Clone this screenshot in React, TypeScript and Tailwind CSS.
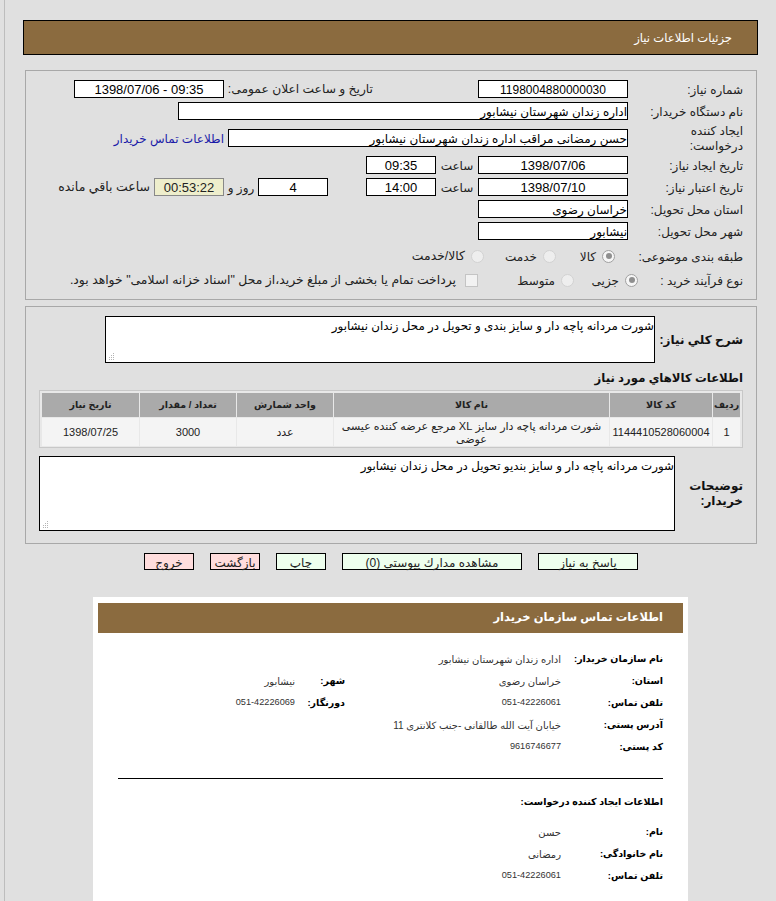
const font = "font-['Liberation_Sans','DejaVu_Sans',sans-serif]";

const box = "h-[18px] border border-black bg-white text-[12px] leading-[18px] shrink-0";
const num = " text-center text-[13px]";

function Row({ label, children, className = "h-[18px]" }: { label: React.ReactNode; children?: React.ReactNode; className?: string }) {
  return (
    <div className={"flex items-center " + className}>
      <div className="w-[115px] shrink-0 pt-[2px] text-[12px] leading-[15px] text-[#222]">{label}</div>
      {children}
    </div>
  );
}

function Radio({ checked }: { checked?: boolean }) {
  if (checked) {
    return (
      <span className="w-[13px] h-[13px] rounded-full border border-[#a0a0a0] bg-[#f6f6f6] flex items-center justify-center shrink-0">
        <span className="w-[6px] h-[6px] rounded-full bg-[#8f8f8f]" />
      </span>
    );
  }
  return <span className="w-[13px] h-[13px] rounded-full border border-[#d2d2d2] bg-[#eeeeee] shrink-0" />;
}

function Grip() {
  return (
    <svg className="absolute left-[2px] bottom-[1px]" width="8" height="8" viewBox="0 0 8 8" fill="#b4b4b4">
      <rect x="5" y="0" width="1" height="1" />
      <rect x="3" y="2" width="1" height="1" />
      <rect x="5" y="2" width="1" height="1" />
      <rect x="1" y="4" width="1" height="1" />
      <rect x="3" y="4" width="1" height="1" />
      <rect x="5" y="4" width="1" height="1" />
      <rect x="1" y="6" width="1" height="1" />
      <rect x="3" y="6" width="1" height="1" />
      <rect x="5" y="6" width="1" height="1" />
    </svg>
  );
}

function valueSize(v: string) {
  return /^[\d-]+$/.test(v) ? "text-[9.2px]" : "text-[10px]";
}

function InfoRow({ label, value, label2, value2 }: { label: string; value: string; label2?: string; value2?: string }) {
  return (
    <div className="flex items-center h-[22px]">
      <div className="w-[102px] shrink-0 text-[9.5px] font-bold text-black whitespace-nowrap">{label}</div>
      <div className={"w-[216px] shrink-0 text-[#333] " + valueSize(value)}>{value}</div>
      {label2 && <div className="w-[50px] shrink-0 text-[9.5px] font-bold text-black">{label2}</div>}
      {value2 && <div className={"text-[#333] " + valueSize(value2)}>{value2}</div>}
    </div>
  );
}

const cols = [
  { w: "w-[27px]", title: "ردیف" },
  { w: "w-[102px]", title: "کد کالا" },
  { w: "w-[275px]", title: "نام کالا" },
  { w: "w-[96px]", title: "واحد شمارش" },
  { w: "w-[96px]", title: "تعداد / مقدار" },
  { w: "w-[97px]", title: "تاریخ نیاز" },
];

const cells = [
  "1",
  "1144410528060004",
  "شورت مردانه پاچه دار سایز XL مرجع عرضه کننده عیسی عوضی",
  "عدد",
  "3000",
  "1398/07/25",
];

export default function App() {
  return (
    <div dir="rtl" className={"w-[776px] h-[901px] overflow-hidden bg-[#e0e0e0] relative " + font}>
      <div className="absolute left-[4px] top-0 bottom-0 w-px bg-[#bdbdbd]" />

      <div className="pt-[20px] pr-[18px] pl-[23px]">
        <div className="h-[35px] border border-black bg-[#8b6b3f] flex items-center pr-[25px] text-[11.6px] text-white">
          جزئیات اطلاعات نیاز
        </div>
      </div>

      <div className="mt-[15px] mr-[19px] ml-[25px] h-[230px] border border-[#a8a8a8] pt-[9px] pr-[13px]">
        <Row label="شماره نیاز:">
          <div className={box + " w-[150px] text-center text-[12.6px]"} dir="ltr">1198004880000030</div>
          <div className="w-[105px] shrink-0" />
          <div className="w-[145px] shrink-0 pt-px text-[12.25px] text-[#222] whitespace-nowrap">تاریخ و ساعت اعلان عمومی:</div>
          <div className={box + " w-[150px] mr-[4px]" + num} dir="ltr">1398/07/06 - 09:35</div>
        </Row>
        <Row label="نام دستگاه خریدار:" className="h-[18px] mt-[4px]">
          <div className={box + " w-[450px]"}>اداره زندان شهرستان نیشابور</div>
        </Row>
        <Row label={<>ایجاد کننده<br />درخواست:</>} className="h-[36px]">
          <div className={box + " w-[400px]"}>حسن رمضانی مراقب اداره زندان شهرستان نیشابور</div>
          <div className="mr-[4px] pt-px text-[12px] text-[#1a1aa8]">اطلاعات تماس خریدار</div>
        </Row>
        <Row label="تاریخ ایجاد نیاز:">
          <div className={box + " w-[150px]" + num}>1398/07/06</div>
          <div className="w-[42px] shrink-0 pt-px text-center text-[12px] text-[#222]">ساعت</div>
          <div className={box + " w-[70px]" + num}>09:35</div>
        </Row>
        <Row label="تاریخ اعتبار نیاز:" className="h-[18px] mt-[4px]">
          <div className={box + " w-[150px]" + num}>1398/07/10</div>
          <div className="w-[42px] shrink-0 pt-px text-center text-[12px] text-[#222]">ساعت</div>
          <div className={box + " w-[70px]" + num}>14:00</div>
          <div className="w-[38px] shrink-0" />
          <div className={box + " w-[70px]" + num}>4</div>
          <div className="w-[34px] shrink-0 pt-px text-center text-[12px] text-[#222]">روز و</div>
          <div className={"h-[18px] w-[70px] shrink-0 border border-[#888] bg-[#eeeecc] leading-[18px] text-[#222]" + num}>00:53:22</div>
          <div className="mr-[4px] pt-px text-[12.5px] text-[#222] whitespace-nowrap">ساعت باقي مانده</div>
        </Row>
        <Row label="استان محل تحویل:" className="h-[18px] mt-[4px]">
          <div className={box + " w-[150px]"}>خراسان رضوی</div>
        </Row>
        <Row label="شهر محل تحویل:" className="h-[18px] mt-[4px]">
          <div className={box + " w-[150px]"}>نیشابور</div>
        </Row>
        <Row label="طبقه بندی موضوعی:" className="h-[18px] mt-[7px]">
          <div className="w-[13px] shrink-0" />
          <Radio checked />
          <span className="w-[40px] shrink-0 mr-[6px] pt-px text-[12px] text-[#222]">کالا</span>
          <Radio />
          <span className="w-[53px] shrink-0 mr-[6px] pt-px text-[12px] text-[#222]">خدمت</span>
          <Radio />
          <span className="mr-[6px] pt-px text-[12.4px] text-[#222]">کالا/خدمت</span>
        </Row>
        <Row label="نوع فرآیند خرید :" className="h-[18px] mt-[6px]">
          <div className="mr-[-10px]" />
          <Radio checked />
          <span className="w-[45px] shrink-0 mr-[6px] pt-px text-[12px] text-[#222]">جزیی</span>
          <Radio />
          <span className="w-[77px] shrink-0 mr-[6px] pt-px text-[12px] text-[#222]">متوسط</span>
          <span className="w-[13px] h-[13px] border border-[#c4c4c4] bg-[#f2f2f2] shrink-0" />
          <span className="mr-[9px] pt-px text-[12.4px] text-[#222] whitespace-nowrap">پرداخت تمام یا بخشی از مبلغ خرید،از محل "اسناد خزانه اسلامی" خواهد بود.</span>
        </Row>
      </div>

      <div className="mt-[6px] mr-[19px] ml-[25px] h-[238px] border border-[#a8a8a8] pt-[9px] pr-[13px]">
        <div className="flex items-center">
          <div className="w-[88px] shrink-0 pt-px text-[12px] font-bold text-[#111]">شرح کلي نياز:</div>
          <div className="relative w-[550px] h-[47px] border border-black bg-white pt-px text-[11.85px] leading-[16px]">
            شورت مردانه پاچه دار و سایز بندی و تحویل در محل زندان نیشابور
            <Grip />
          </div>
        </div>
        <div className="mt-[7px] text-[11.7px] leading-[16px] font-bold text-[#111]">اطلاعات کالاهاي مورد نياز</div>
        <div className="mt-[4px] w-[704px] h-[58px] border border-[#c8c8c8] bg-[#e8e8e8] p-[2px]">
          <div className="flex gap-px h-[24px]">
            {cols.map((c) => (
              <div key={c.title} className={c.w + " shrink-0 bg-[#aaaaaa] flex items-center justify-center text-[9.5px] font-bold text-[#222] whitespace-nowrap"}>
                {c.title}
              </div>
            ))}
          </div>
          <div className="flex gap-px h-[28px] mt-px">
            {cols.map((c, i) => (
              <div key={c.title} className={c.w + " shrink-0 bg-[#f4f4f4] pt-px flex items-center justify-center text-center text-[11px] leading-[13px] text-[#222]"}>
                {cells[i]}
              </div>
            ))}
          </div>
        </div>
        <div className="mt-[8px] flex items-center">
          <div className="w-[68px] shrink-0 text-[12px] leading-[15px] font-bold text-[#111]">توضیحات خریدار:</div>
          <div className="relative w-[636px] h-[75px] border border-black bg-white pt-px text-[11.85px] leading-[16px]">
            شورت مردانه پاچه دار و سایز بندیو تحویل در محل زندان نیشابور
            <Grip />
          </div>
        </div>
      </div>

      <div className="mt-[9px] mr-[138px] flex text-[12px] text-[#222]">
        <button className="w-[100px] h-[17px] pt-[2px] border border-black bg-[#eeffee] leading-[15px]">پاسخ به نیاز</button>
        <button className="w-[180px] h-[17px] pt-[2px] mr-[16px] border border-black bg-[#eeffee] leading-[15px]">مشاهده مدارك پيوستي (0)</button>
        <button className="w-[50px] h-[17px] pt-[2px] mr-[16px] border border-black bg-[#eeffee] leading-[15px]">چاپ</button>
        <button className="w-[50px] h-[17px] pt-[2px] mr-[16px] border border-black bg-[#ffdddd] leading-[15px]">بازگشت</button>
        <button className="w-[50px] h-[17px] pt-[2px] mr-[16px] border border-black bg-[#ffdddd] leading-[15px]">خروج</button>
      </div>

      <div className="mt-[27px] mr-[88px] w-[595px] h-[304px] bg-white pt-[6px] px-[5px]">
        <div className="h-[30px] bg-[#8b6b3f] flex items-center pr-[20px] text-[11.5px] font-bold text-white">
          اطلاعات تماس سازمان خریدار
        </div>
        <div className="pt-[15px] pr-[20px]">
          <InfoRow label="نام سازمان خریدار:" value="اداره زندان شهرستان نیشابور" />
          <InfoRow label="استان:" value="خراسان رضوی" label2="شهر:" value2="نیشابور" />
          <InfoRow label="تلفن تماس:" value="051-42226061" label2="دورنگار:" value2="051-42226069" />
          <InfoRow label="آدرس پستی:" value="خیابان آیت الله طالقانی -جنب کلانتری 11" />
          <InfoRow label="کد پستی:" value="9616746677" />
          <div className="mt-[20px] w-[545px] h-px bg-black" />
          <div className="mt-[15px] text-[9.5px] leading-[16px] font-bold text-black">اطلاعات ایجاد کننده درخواست:</div>
          <div className="mt-[11px]">
            <InfoRow label="نام:" value="حسن" />
            <InfoRow label="نام خانوادگی:" value="رمضانی" />
            <InfoRow label="تلفن تماس:" value="051-42226061" />
          </div>
        </div>
      </div>
    </div>
  );
}
